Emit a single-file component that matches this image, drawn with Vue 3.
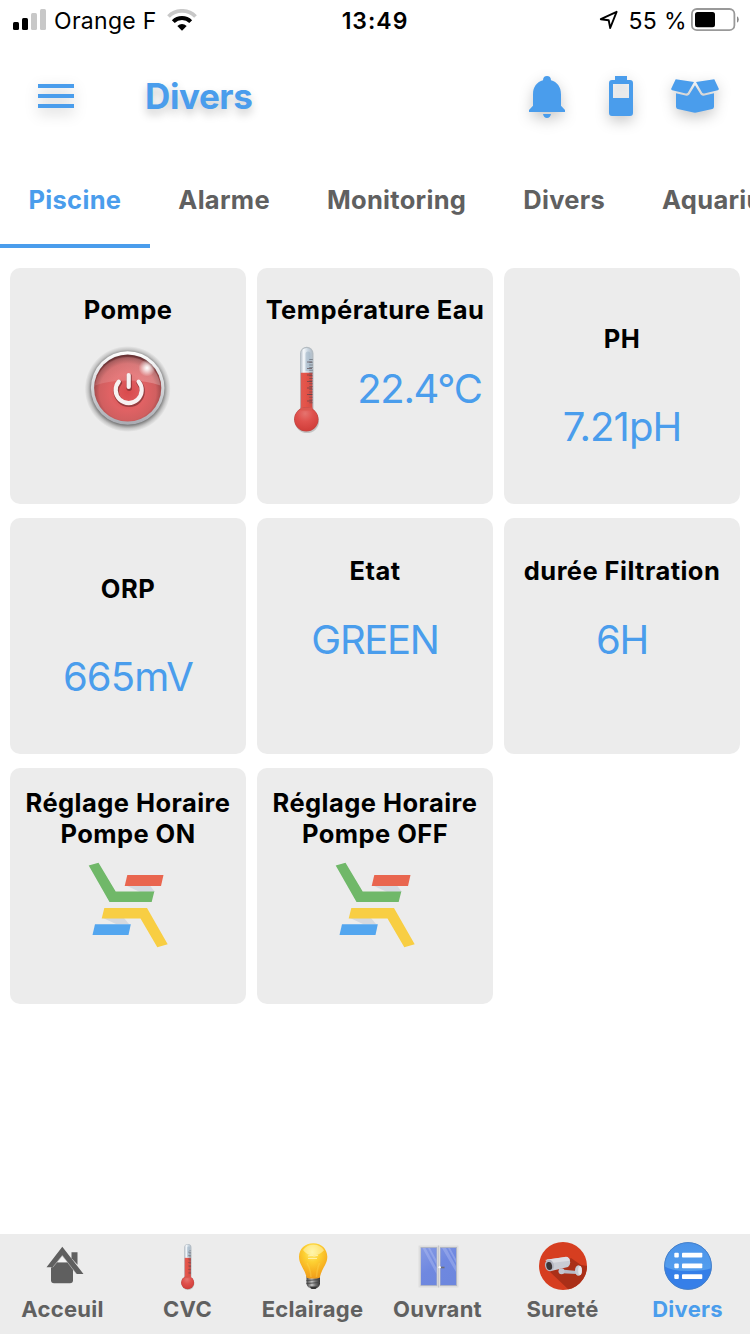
<template>
  <div class="app">
    <!-- Icon sprite -->
    <svg class="sprite" width="0" height="0">
      <defs>
        <radialGradient id="power-shadow">
          <stop offset="0.82" stop-color="#333" stop-opacity="0.7" />
          <stop offset="0.92" stop-color="#555" stop-opacity="0.25" />
          <stop offset="1" stop-color="#555" stop-opacity="0" />
        </radialGradient>
        <linearGradient id="power-ring" x1="0" y1="0" x2="0" y2="1">
          <stop offset="0" stop-color="#ffffff" />
          <stop offset="0.5" stop-color="#d3d5d8" />
          <stop offset="1" stop-color="#a9abb2" />
        </linearGradient>
        <radialGradient id="power-face" cx="0.5" cy="0.56" r="0.54">
          <stop offset="0" stop-color="#d94a4c" />
          <stop offset="0.5" stop-color="#e06264" />
          <stop offset="0.78" stop-color="#d15f60" />
          <stop offset="0.93" stop-color="#a04a4b" />
          <stop offset="1" stop-color="#683335" />
        </radialGradient>
        <linearGradient id="power-gloss" x1="0" y1="0" x2="1" y2="0.4">
          <stop offset="0" stop-color="#ffffff" stop-opacity="0.06" />
          <stop offset="1" stop-color="#ffffff" stop-opacity="0.22" />
        </linearGradient>
        <radialGradient id="power-spark">
          <stop offset="0" stop-color="#ffffff" />
          <stop offset="0.25" stop-color="#ffffff" stop-opacity="0.8" />
          <stop offset="1" stop-color="#ffffff" stop-opacity="0" />
        </radialGradient>
        <linearGradient id="glass" x1="0" y1="0" x2="1" y2="0">
          <stop offset="0" stop-color="#b9c2cc" />
          <stop offset="0.25" stop-color="#f5f8fb" />
          <stop offset="0.6" stop-color="#cbd7e2" />
          <stop offset="1" stop-color="#b0bbc6" />
        </linearGradient>
        <linearGradient id="mercury" x1="0" y1="0" x2="1" y2="0">
          <stop offset="0" stop-color="#dc5b53" />
          <stop offset="0.35" stop-color="#e65449" />
          <stop offset="1" stop-color="#d14c45" />
        </linearGradient>
        <radialGradient id="mercury-ball" cx="0.45" cy="0.25" r="0.7">
          <stop offset="0" stop-color="#e5746f" />
          <stop offset="0.5" stop-color="#df514d" />
          <stop offset="1" stop-color="#d2403c" />
        </radialGradient>
        <radialGradient id="bulb-glass" cx="0.47" cy="0.25" r="0.8">
          <stop offset="0" stop-color="#fff08c" />
          <stop offset="0.35" stop-color="#fdd133" />
          <stop offset="0.7" stop-color="#f7b020" />
          <stop offset="1" stop-color="#ec9718" />
        </radialGradient>
        <linearGradient id="bulb-base" x1="0" y1="0" x2="1" y2="0">
          <stop offset="0" stop-color="#444" />
          <stop offset="0.4" stop-color="#c4c4c4" />
          <stop offset="0.65" stop-color="#777" />
          <stop offset="1" stop-color="#333" />
        </linearGradient>
        <linearGradient id="pane" x1="0" y1="0" x2="0.6" y2="1">
          <stop offset="0" stop-color="#859ae4" />
          <stop offset="0.55" stop-color="#6f88e0" />
          <stop offset="1" stop-color="#6d87de" />
        </linearGradient>
        <linearGradient id="list-top" x1="0" y1="0" x2="0" y2="1">
          <stop offset="0" stop-color="#4a93ea" />
          <stop offset="1" stop-color="#549eee" />
        </linearGradient>
        <clipPath id="camera-clip"><circle cx="24" cy="24" r="24" /></clipPath>
        <clipPath id="list-clip"><circle cx="24" cy="24" r="23.5" /></clipPath>
      </defs>

      <symbol id="power" viewBox="0 0 90 90">
        <circle cx="44.700" cy="46" r="43" fill="url(#power-shadow)" />
        <circle cx="44.700" cy="45" r="36.800" fill="url(#power-ring)" />
        <circle cx="44.700" cy="45" r="33.600" fill="url(#power-face)" />
        <path d="M12 42.500a33 33 0 0 1 65.400 0q-14-5-32.700-5T12 42.500z" fill="url(#power-gloss)" />
        <circle cx="64" cy="25" r="8.500" fill="url(#power-spark)" />
        <g fill="none" stroke-linecap="round">
          <path d="M35.800 38.600a13 13 0 1 0 19.800 0M45.700 32v12" stroke="#5e2224" stroke-opacity="0.55" stroke-width="5.500" transform="translate(0.5 1.200)" />
          <path d="M35.800 38.600a13 13 0 1 0 19.800 0M45.700 32v12" stroke="#f7f1f1" stroke-width="4.200" />
        </g>
      </symbol>

      <symbol id="thermometer" viewBox="0 0 28 90">
        <ellipse cx="14" cy="78.500" rx="12" ry="11.500" fill="#777" opacity="0.35" />
        <path d="M7 66V10.500a6.600 6.600 0 0 1 13.500 0V66z" fill="#909ca6" opacity="0.6" />
        <path d="M7.800 65V10.700a5.800 5.800 0 0 1 11.600 0V65z" fill="url(#glass)" />
        <path d="M7.800 29.700h11.600v38H7.800z" fill="url(#mercury)" />
        <path d="M12.500 11a2.500 2.500 0 0 1 5 0v17h-5z" fill="#9aafc1" opacity="0.5" />
        <path d="M18 16v46" stroke="#454b55" stroke-width="3.500" stroke-dasharray="1 1.700" opacity="0.5" />
        <path d="M14 19h5M14 25.500h5M14 32h5M14 38.500h5M14 45h5M14 51.500h5M14 58h5" stroke="#5b4347" stroke-width="1" opacity="0.65" />
        <circle cx="13.300" cy="76.300" r="12.200" fill="#bb4844" />
        <circle cx="13.300" cy="76.300" r="11.600" fill="url(#mercury-ball)" />
        <path d="M7.800 64.500h11.600v3H7.800z" fill="#dc5850" />
      </symbol>

      <symbol id="schedule" viewBox="0 0 80 86">
        <path d="M38 23.500h24l5 6.500H52z" fill="#d5d9df" />
        <path d="M15 56h21l5 6H28z" fill="#d5d9df" />
        <path d="M.7 3.500 10.500.7 27.700 29.500h38.600L63.700 40H21.500z" fill="#70b869" />
        <path d="M39.300 13H75.500L73 24H36.700z" fill="#e9664f" />
        <path d="M16.300 46H59L79.700 82.200 69.300 85.200 52.500 56.500H13.700z" fill="#f8ce43" />
        <path d="M7 62.200H42.800L40.500 73H4.500z" fill="#53a6ef" />
      </symbol>

      <symbol id="home" viewBox="0 0 48 48">
        <path d="M32.500 10.200H38.500v12.500l-6-6.500z" fill="#5f5f5f" />
        <path d="M16.500 20.300H29.500l4.500 6v12q0 3-3 3H15q-3 0-3-3V26z" fill="#5f5f5f" />
        <path d="M7.500 25.300 23.300 4.800 44.500 32h-7L23.300 13.800 13.800 25.300z" fill="#5f5f5f" />
        <path d="M13.800 25.300 23.300 13.500 37.500 32" fill="none" stroke="#c9c9c9" stroke-width="0.600" />
        <path d="M18.600 20.300 23.300 14.400 28 20.300z" fill="#f4f4f4" />
      </symbol>

      <symbol id="bulb" viewBox="0 0 48 48">
        <path d="M17.500 34h13.500v8q-1 4.500-6.500 4.800-6-.3-7-4.800z" fill="url(#bulb-base)" />
        <path d="M17.500 38.500l13.500-1M17.500 41.500l13.500-1" stroke="#464646" stroke-width="0.900" />
        <path d="M20.500 44.500h8l-2 2.500h-4z" fill="#353535" />
        <path d="M24.300 1.200c8 0 14 5.800 14 13.500 0 8-5.500 11-7.500 21q-6.500 1.800-13.200 0c-2-9.500-7.600-13-7.600-21 0-7.700 6-13.500 14.300-13.500z" fill="url(#bulb-glass)" />
        <path d="M14 8q4-5.500 11-5.300 6.500 0 10 5.500-4 5-10.500 5Q18 13.500 14 8z" fill="#fffcc9" opacity="0.5" />
        <path d="M19 14l4-.7 2 .7 4-.7M19 16.500h9" fill="none" stroke="#fff5bc" stroke-width="1" opacity="0.8" />
        <path d="M18 21q3.500 6 4 14M30.500 21q-2.500 6-3 14" fill="none" stroke="#ffda55" stroke-width="1.500" opacity="0.35" />
      </symbol>

      <symbol id="window" viewBox="0 0 48 48">
        <path d="M4.500 3.500h40v42h-40z" fill="#dedede" />
        <path d="M6.500 5h16.700v39H6.500zM26 5h17v39H26z" fill="#b0b5c4" />
        <path d="M7 6h15.500v37H7zM26.500 6H42v37H26.500z" fill="url(#pane)" />
        <path d="M8.500 6h3l11 20v6zM14 6h2l6.500 12v5zM28 6h4l10 18v6zM34 6h2l6 11v4z" fill="#bdc9f5" opacity="0.35" />
        <path d="M24.500 3.500v42" stroke="#c0c0c3" stroke-width="0.700" />
        <path d="M25.500 25.500h5" stroke="#6d6e78" stroke-width="1.600" />
        <circle cx="25.700" cy="25.300" r="1.200" fill="#fff" />
      </symbol>

      <symbol id="camera" viewBox="0 0 48 48">
        <circle cx="24" cy="24" r="24" fill="#d63e20" />
        <path d="M10 29 30 48h18V24l-6-1-10-7z" fill="#aa2f18" clip-path="url(#camera-clip)" />
        <path d="M22.500 27.500l15.500 1.500v3l-15.500-.7z" fill="#b7b9c6" />
        <circle cx="22.500" cy="29.200" r="3" fill="#c3c6d1" />
        <ellipse cx="39.500" cy="28.500" rx="3.500" ry="5.200" fill="#c7cad4" />
        <ellipse cx="41" cy="28.500" rx="1.800" ry="4.500" fill="#e5e6eb" />
        <path d="M8 17.500 27.500 15q3.500 1.500 3.700 5.500-.2 3.500-2.200 4.500L12 29z" fill="#c9cbd3" />
        <path d="M6 18 27 14.700q3.500.3 4 4L12 21z" fill="#dcdde3" />
        <ellipse cx="10.500" cy="23.500" rx="4.500" ry="5.800" fill="#b5b7c3" transform="rotate(-12 10.500 23.500)" />
        <ellipse cx="10.200" cy="24" rx="2.900" ry="4" fill="#3c3536" transform="rotate(-12 10.200 24)" />
      </symbol>

      <symbol id="list" viewBox="0 0 48 48">
        <circle cx="24" cy="24" r="23.800" fill="#3e80d3" />
        <g clip-path="url(#list-clip)">
          <path d="M1 1h46v46H1z" fill="#367fe8" />
          <path d="M0 0h48v26q-7 3-24 3T0 24z" fill="url(#list-top)" />
        </g>
        <circle cx="24" cy="24" r="23.400" fill="none" stroke="#487fc4" stroke-width="0.800" />
        <g fill="#fff">
          <rect x="10.300" y="10.700" width="4.500" height="4.800" rx="1" />
          <rect x="10.300" y="21.500" width="4.500" height="4.800" rx="1" />
          <rect x="10.300" y="32.300" width="4.500" height="4.800" rx="1" />
          <rect x="18" y="10.700" width="20.300" height="4.800" rx="0.800" />
          <rect x="18" y="21.500" width="20.300" height="4.800" rx="0.800" />
          <rect x="18" y="32.300" width="20.300" height="4.800" rx="0.800" />
        </g>
      </symbol>
    </svg>

    <!-- Status bar -->
    <div class="status-bar">
      <div class="status-left">
        <svg class="signal" width="34" height="22" viewBox="0 0 34 22">
          <rect x="0" y="13" width="6" height="8" rx="1.500" />
          <rect x="9" y="9" width="6" height="12" rx="1.500" />
          <rect x="18" y="4" width="6" height="17" rx="1.500" fill="#c8c8c8" />
          <rect x="27" y="0" width="6" height="21" rx="1.500" fill="#c8c8c8" />
        </svg>
        <span class="carrier">Orange F</span>
        <svg class="wifi" width="30" height="22" viewBox="0 0 30 22">
          <path d="M1.500 7.500a19 19 0 0 1 27 0" fill="none" stroke="#c8c8c8" stroke-width="3.800" />
          <path d="M6.300 12.700a12.300 12.300 0 0 1 17.400 0" fill="none" stroke="#000" stroke-width="4" />
          <path d="M10.300 17q4.700-3.800 9.400 0L15 21.800z" />
        </svg>
      </div>
      <span class="clock">13:49</span>
      <div class="status-right">
        <svg class="location" width="20" height="20" viewBox="0 0 20 20">
          <path d="M1.800 9.200 17.600 1.800 11.200 18 9.700 10.200z" fill="none" stroke="#000" stroke-width="1.900" stroke-linejoin="round" />
        </svg>
        <span class="percent">55 %</span>
        <svg class="battery" width="48" height="24" viewBox="0 0 48 24">
          <rect x="0.900" y="1" width="42.500" height="21.200" rx="5" fill="none" stroke="#999" stroke-width="1.800" />
          <rect x="4" y="4" width="20" height="15.200" rx="2.500" />
          <path d="M46 8.200q1.800 1 1.800 3.300T46 14.800z" fill="#888" />
        </svg>
      </div>
    </div>

    <!-- Header -->
    <header class="header">
      <button class="icon-btn menu-btn">
        <svg width="36" height="24" viewBox="0 0 36 24">
          <path d="M0 0h36v4H0zM0 10h36v4H0zM0 20h36v4H0z" />
        </svg>
      </button>
      <h1 class="page-title">Divers</h1>
      <div class="header-actions">
        <button class="icon-btn bell-btn">
          <svg width="36" height="42" viewBox="0 0 36 42">
            <path d="M14 38h8q-.8 4-4 4t-4-4zM0 36v-2l4-4.200V18.500C4 10.500 8 6 14 4.300 14 1.500 15.500 0 18 0s4 1.500 4 4.300C28 6 32 10.500 32 18.500v11.300l4 4.200v2z" />
          </svg>
        </button>
        <button class="icon-btn charge-btn">
          <svg width="24" height="40" viewBox="0 0 24 40">
            <path fill-rule="evenodd" d="M6 0h12v4h3q3 0 3 3v30q0 3-3 3H3q-3 0-3-3V7q0-3 3-3h3zM4 8v14h16V8z" />
          </svg>
        </button>
        <button class="icon-btn box-btn">
          <svg width="48" height="34" viewBox="0 0 48 34">
            <path d="M4.700.3 23 3 16.800 13.700q-.8 1-2 .8L1.200 11.200Q-.2 10.800.3 9.500zM25 3 43.300.3 47.700 9.500q.5 1.300-.9 1.700L33.200 14.500q-1.200.2-2-.8z" />
            <path d="M5 14.200 15.500 16.700q1.800.3 2.800-1.100L24 6.200l5.700 9.400q1 1.400 2.800 1.100L43 14.200V27.500q0 2-1.700 2.500L25.500 33.600q-1.500.3-3 0L6.700 30Q5 29.500 5 27.500z" />
          </svg>
        </button>
      </div>
    </header>

    <!-- Category tabs -->
    <nav class="tabs">
      <button
        v-for="(tab, index) in tabs"
        :key="tab"
        :class="['tab', { active: activeTab === index }]"
        @click="activeTab = index"
      >
        {{ tab }}
      </button>
    </nav>

    <!-- Device tiles -->
    <main class="tiles">
      <section v-for="tile in tiles" :key="tile.title" :class="['tile', tile.layout]">
        <h2 class="tile-title">{{ tile.title }}</h2>
        <div class="tile-body">
          <svg v-if="tile.icon" :class="['tile-icon', tile.icon]"><use :href="'#' + tile.icon" /></svg>
          <span v-if="tile.value" class="tile-value">{{ tile.value }}</span>
        </div>
      </section>
    </main>

    <!-- Bottom navigation -->
    <footer class="bottom-nav">
      <button
        v-for="item in navItems"
        :key="item.label"
        :class="['nav-item', { active: activeNav === item.label }]"
        @click="activeNav = item.label"
      >
        <svg class="nav-icon"><use :href="'#' + item.icon" /></svg>
        <span class="nav-label">{{ item.label }}</span>
      </button>
    </footer>
  </div>
</template>

<script setup>
import { ref } from 'vue';

const activeTab = ref(0);
const activeNav = ref('Divers');

const tabs = ['Piscine', 'Alarme', 'Monitoring', 'Divers', 'Aquarium'];

const tiles = [
  { title: 'Pompe', icon: 'power', layout: 'with-icon' },
  { title: 'Température Eau', icon: 'thermometer', value: '22.4°C', layout: 'with-icon' },
  { title: 'PH', value: '7.21pH', layout: 'spaced' },
  { title: 'ORP', value: '665mV', layout: 'spaced' },
  { title: 'Etat', value: 'GREEN', layout: 'compact' },
  { title: 'durée Filtration', value: '6H', layout: 'compact' },
  { title: 'Réglage Horaire Pompe ON', icon: 'schedule', layout: 'two-lines' },
  { title: 'Réglage Horaire Pompe OFF', icon: 'schedule', layout: 'two-lines' },
];

const navItems = [
  { label: 'Acceuil', icon: 'home' },
  { label: 'CVC', icon: 'thermometer' },
  { label: 'Eclairage', icon: 'bulb' },
  { label: 'Ouvrant', icon: 'window' },
  { label: 'Sureté', icon: 'camera' },
  { label: 'Divers', icon: 'list' },
];
</script>

<style>
body {
  margin: 0;
  background: #fff;
}
</style>

<style scoped>
.app {
  display: flex;
  flex-direction: column;
  width: 750px;
  height: 1334px;
  overflow: hidden;
  background: #fff;
  color: #000;
  font-family: Inter, "Liberation Sans", sans-serif;
}

.sprite {
  position: absolute;
}

button {
  padding: 0;
  border: none;
  background: none;
  font-family: inherit;
  cursor: pointer;
}

svg {
  display: block;
  flex: none;
}

.status-bar {
  display: grid;
  grid-template-columns: 1fr auto 1fr;
  align-items: center;
  height: 40px;
  padding: 0 11px 0 13px;
  font-size: 23px;
}

.status-left,
.status-right {
  display: flex;
  align-items: center;
}

.status-right {
  justify-content: flex-end;
}

.carrier {
  margin: 1px 10px 0 7px;
  letter-spacing: 0.3px;
}

.clock {
  margin: 1px 2px 0 0;
  font-weight: 600;
  letter-spacing: 1px;
}

.percent {
  margin: 1px 4px 0 9px;
  letter-spacing: 0.4px;
}

.header {
  display: flex;
  align-items: center;
  height: 112px;
  padding: 0 31px 0 38px;
}

.icon-btn svg {
  fill: #4a9dec;
  filter: drop-shadow(0 5px 7px rgba(0, 0, 0, 0.22));
}

.page-title {
  flex: 1;
  margin: 0 0 0 71px;
  font-size: 35px;
  font-weight: 700;
  letter-spacing: -0.4px;
  color: #4a9dec;
  text-shadow: 0 5px 10px rgba(0, 0, 0, 0.22);
}

.header-actions {
  display: flex;
  align-items: center;
}

.bell-btn {
  margin: 2px 44px 0 0;
}

.charge-btn {
  margin-right: 38px;
}

.box-btn {
  margin-bottom: 1px;
}

.tabs {
  display: flex;
  height: 96px;
  overflow: hidden;
}

.tab {
  flex: none;
  box-sizing: border-box;
  padding: 2px 28.5px 0;
  border-bottom: 4px solid transparent;
  font-size: 25.5px;
  font-weight: 700;
  letter-spacing: 0.3px;
  white-space: nowrap;
  color: #606060;
}

.tab.active {
  border-color: #4a9dec;
  color: #4a9dec;
}

.tiles {
  display: grid;
  grid-template-columns: repeat(3, 236px);
  grid-auto-rows: 236px;
  align-content: start;
  gap: 14px 11px;
  flex: 1;
  padding: 20px 10px 0;
}

.tile {
  box-sizing: border-box;
  overflow: hidden;
  border-radius: 10px;
  background: #ececec;
}

.tile-title {
  margin: 0;
  padding: 0 5px;
  font-size: 25.5px;
  font-weight: 700;
  line-height: 31px;
  letter-spacing: 0.45px;
  text-align: center;
}

.tile-body {
  display: flex;
  align-items: center;
  justify-content: center;
}

.tile-value {
  font-size: 40px;
  font-weight: 400;
  line-height: 48px;
  letter-spacing: -1.3px;
  color: #4a9dec;
}

.with-icon {
  padding-top: 26px;
}

.with-icon .tile-body {
  height: 90px;
  margin-top: 18px;
}

.with-icon .tile-value {
  margin-top: 2px;
}

.spaced {
  padding-top: 55px;
}

.spaced .tile-body {
  margin-top: 49px;
}

.spaced .tile-value {
  letter-spacing: -0.9px;
}

.compact {
  padding-top: 37px;
}

.compact .tile-body {
  margin-top: 30px;
}

.two-lines {
  padding-top: 19px;
}

.two-lines .tile-body {
  margin-top: 13px;
}

.tile-icon.power {
  width: 90px;
  height: 90px;
}

.tile-icon.thermometer {
  width: 28px;
  height: 90px;
  margin: 0 36px 0 25px;
}

.tile-icon.schedule {
  width: 80px;
  height: 86px;
}

.bottom-nav {
  display: grid;
  grid-template-columns: repeat(6, 125px);
  height: 100px;
  background: #ececec;
}

.nav-item {
  display: flex;
  flex-direction: column;
  align-items: center;
  padding-top: 8px;
  color: #606060;
}

.nav-icon {
  width: 48px;
  height: 48px;
  margin-left: 1px;
}

.nav-label {
  margin-top: 5px;
  font-size: 22px;
  font-weight: 700;
  line-height: 28px;
  letter-spacing: 0.25px;
}

.nav-item.active {
  color: #4a9dec;
}
</style>
